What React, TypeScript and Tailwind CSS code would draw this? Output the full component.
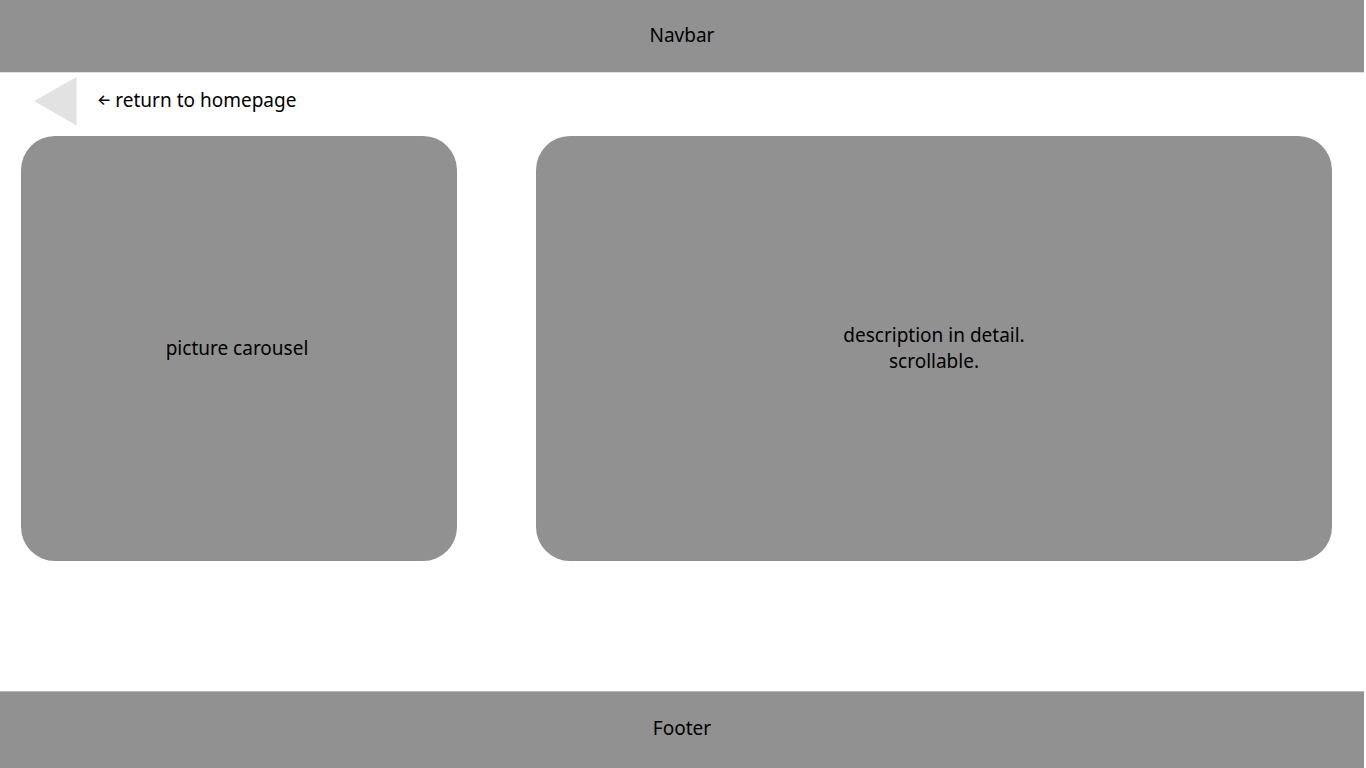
export default function App() {
  return (
    <div className="flex min-h-screen flex-col bg-white pr-0.5 font-['Noto_Sans',sans-serif] text-[19px] leading-[26px] text-black">
      <header className="flex h-[73px] items-center justify-center border-b border-[#dedede] bg-[#919191] bg-clip-padding pb-0.5">
        Navbar
      </header>
      <main className="flex-1 pr-8 pl-[21px]">
        <a href="#home" className="flex h-[63px] w-fit items-center gap-5 pb-2 pl-[13px]">
          <svg width="43" height="50" viewBox="0 0 43 50" aria-hidden="true">
            <path d="M42.5 1v48.5L0 25z" fill="#e2e2e2" />
          </svg>
          <span className="flex items-center gap-1 pb-0.5">
            <span className="font-['Inter',sans-serif] text-[15px] font-medium">←</span>
            <span>return to homepage</span>
          </span>
        </a>
        <div className="grid grid-cols-[436fr_796fr] gap-[79px]">
          <section className="flex h-[425px] items-center justify-center rounded-[34px] bg-[#919191] pr-1 pb-0.5">
            picture carousel
          </section>
          <section className="flex h-[425px] items-center justify-center overflow-y-auto rounded-[34px] bg-[#919191] pb-0.5 text-center">
            <p>
              description in detail.
              <br />
              scrollable.
            </p>
          </section>
        </div>
      </main>
      <footer className="flex h-[77px] items-center justify-center border-t border-[#b5b5b5] bg-[#919191] pb-1">
        Footer
      </footer>
    </div>
  );
}
